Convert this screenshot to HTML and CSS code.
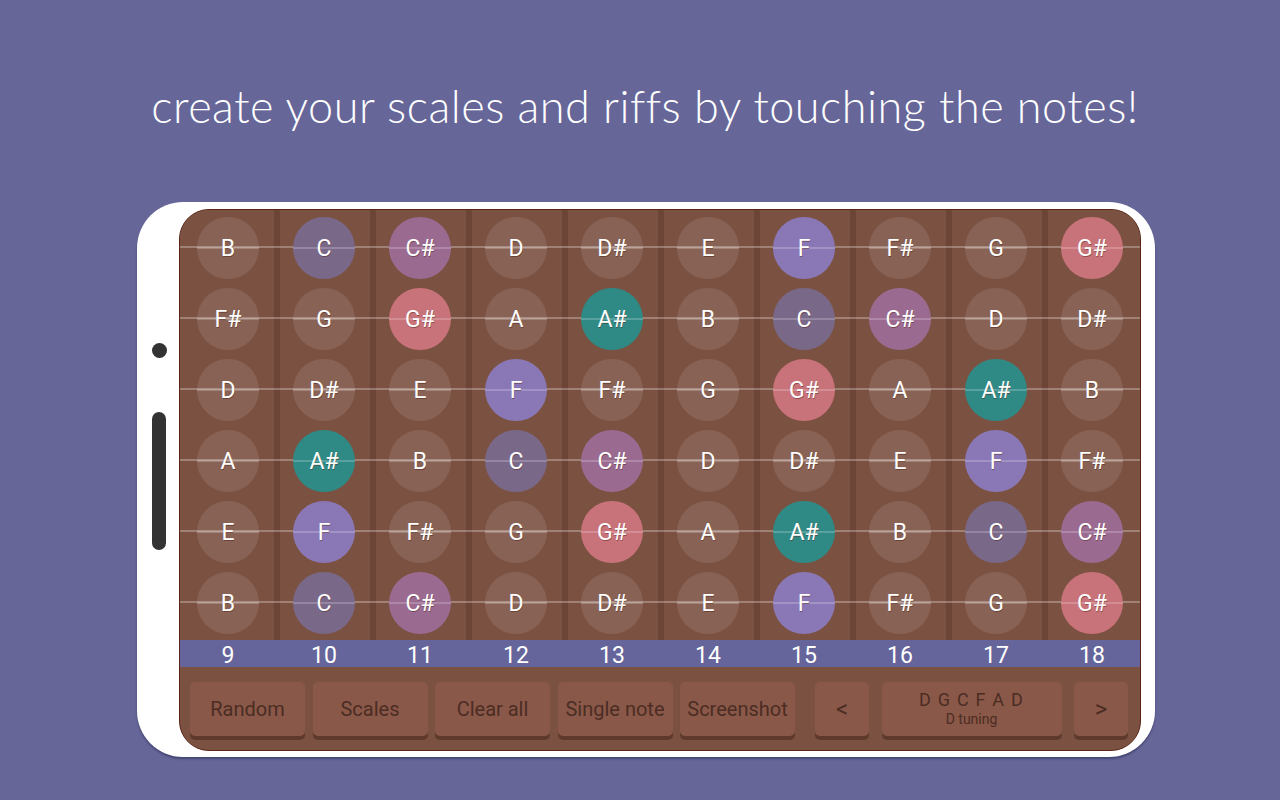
FILE: index.html
```html
<!DOCTYPE html>
<html lang="en">
<head>
<meta charset="utf-8">
<title>Fretboard</title>
<link rel="stylesheet" href="styles.css">
</head>
<body>
<h1 class="title">create your scales and riffs by touching the notes!</h1>
<div class="phone">
  <div class="side"><span class="cam"></span><span class="sidebar"></span></div>
  <div class="screen">
    <div class="fretboard">
      <div class="cell"><span class="note">B</span></div>
      <div class="cell"><span class="note n-c">C</span></div>
      <div class="cell"><span class="note n-cs">C#</span></div>
      <div class="cell"><span class="note">D</span></div>
      <div class="cell"><span class="note">D#</span></div>
      <div class="cell"><span class="note">E</span></div>
      <div class="cell"><span class="note n-f">F</span></div>
      <div class="cell"><span class="note">F#</span></div>
      <div class="cell"><span class="note">G</span></div>
      <div class="cell"><span class="note n-gs">G#</span></div>

      <div class="cell"><span class="note">F#</span></div>
      <div class="cell"><span class="note">G</span></div>
      <div class="cell"><span class="note n-gs">G#</span></div>
      <div class="cell"><span class="note">A</span></div>
      <div class="cell"><span class="note n-as">A#</span></div>
      <div class="cell"><span class="note">B</span></div>
      <div class="cell"><span class="note n-c">C</span></div>
      <div class="cell"><span class="note n-cs">C#</span></div>
      <div class="cell"><span class="note">D</span></div>
      <div class="cell"><span class="note">D#</span></div>

      <div class="cell"><span class="note">D</span></div>
      <div class="cell"><span class="note">D#</span></div>
      <div class="cell"><span class="note">E</span></div>
      <div class="cell"><span class="note n-f">F</span></div>
      <div class="cell"><span class="note">F#</span></div>
      <div class="cell"><span class="note">G</span></div>
      <div class="cell"><span class="note n-gs">G#</span></div>
      <div class="cell"><span class="note">A</span></div>
      <div class="cell"><span class="note n-as">A#</span></div>
      <div class="cell"><span class="note">B</span></div>

      <div class="cell"><span class="note">A</span></div>
      <div class="cell"><span class="note n-as">A#</span></div>
      <div class="cell"><span class="note">B</span></div>
      <div class="cell"><span class="note n-c">C</span></div>
      <div class="cell"><span class="note n-cs">C#</span></div>
      <div class="cell"><span class="note">D</span></div>
      <div class="cell"><span class="note">D#</span></div>
      <div class="cell"><span class="note">E</span></div>
      <div class="cell"><span class="note n-f">F</span></div>
      <div class="cell"><span class="note">F#</span></div>

      <div class="cell"><span class="note">E</span></div>
      <div class="cell"><span class="note n-f">F</span></div>
      <div class="cell"><span class="note">F#</span></div>
      <div class="cell"><span class="note">G</span></div>
      <div class="cell"><span class="note n-gs">G#</span></div>
      <div class="cell"><span class="note">A</span></div>
      <div class="cell"><span class="note n-as">A#</span></div>
      <div class="cell"><span class="note">B</span></div>
      <div class="cell"><span class="note n-c">C</span></div>
      <div class="cell"><span class="note n-cs">C#</span></div>

      <div class="cell"><span class="note">B</span></div>
      <div class="cell"><span class="note n-c">C</span></div>
      <div class="cell"><span class="note n-cs">C#</span></div>
      <div class="cell"><span class="note">D</span></div>
      <div class="cell"><span class="note">D#</span></div>
      <div class="cell"><span class="note">E</span></div>
      <div class="cell"><span class="note n-f">F</span></div>
      <div class="cell"><span class="note">F#</span></div>
      <div class="cell"><span class="note">G</span></div>
      <div class="cell"><span class="note n-gs">G#</span></div>
    </div>
    <div class="frets">
      <span>9</span><span>10</span><span>11</span><span>12</span><span>13</span>
      <span>14</span><span>15</span><span>16</span><span>17</span><span>18</span>
    </div>
    <div class="controls">
      <div class="group group-main">
        <button class="btn">Random</button>
        <button class="btn">Scales</button>
        <button class="btn">Clear all</button>
        <button class="btn">Single note</button>
        <button class="btn">Screenshot</button>
      </div>
      <div class="group group-tuning">
        <button class="btn btn-arrow">&lt;</button>
        <button class="btn btn-tuning"><span class="tuning-notes">D G C F A D</span><span class="tuning-name">D tuning</span></button>
        <button class="btn btn-arrow">&gt;</button>
      </div>
    </div>
  </div>
</div>
</body>
</html>
```

FILE: styles.css
```css
* { box-sizing: border-box; }

html, body {
  margin: 0;
  padding: 0;
}

body {
  width: 1280px;
  height: 800px;
  overflow: hidden;
  background: #666699;
  font-family: Roboto, "Liberation Sans", Arial, sans-serif;
}

.title {
  margin: 0;
  padding-top: 80px;
  padding-left: 10px;
  height: 132px;
  line-height: 52px;
  text-align: center;
  font-family: Lato, "Open Sans", sans-serif;
  font-weight: 300;
  font-size: 45px;
  letter-spacing: 0.5px;
  color: #ffffff;
  white-space: nowrap;
}

.phone {
  margin: 70px 0 0 137px;
  width: 1018px;
  height: 555px;
  padding: 7px 14px 6px 0;
  background: #ffffff;
  border-radius: 46px;
  display: flex;
  box-shadow: 0 2px 2px rgba(30, 30, 70, 0.45);
}

.side {
  width: 42px;
  display: flex;
  flex-direction: column;
  align-items: center;
  padding-top: 134px;
  padding-left: 2px;
}

.cam {
  width: 15px;
  height: 15px;
  border-radius: 50%;
  background: #333333;
}

.sidebar {
  margin-top: 54px;
  width: 14px;
  height: 138px;
  border-radius: 7px;
  background: #333333;
}

.screen {
  width: 962px;
  height: 542px;
  border: 1px solid #5a2416;
  border-radius: 30px;
  overflow: hidden;
  display: flex;
  flex-direction: column;
  background: #7b5141;
}

.fretboard {
  height: 430px;
  padding: 2px 0;
  display: grid;
  grid-template-columns: repeat(10, 96px);
  grid-template-rows: repeat(6, 71px);
  background:
    linear-gradient(90deg, #7b5141 0 4px, transparent 4px),
    linear-gradient(270deg, #7b5141 0 2px, transparent 2px),
    repeating-linear-gradient(90deg, #6c4536 0 6px, #7b5141 6px 96px);
  background-position: 0 0, 0 0, 94px 0;
}

.cell {
  display: flex;
  align-items: center;
  justify-content: center;
  background: linear-gradient(180deg, transparent 34px, rgba(255, 255, 255, 0.28) 34px, rgba(255, 255, 255, 0.28) 36px, transparent 36px);
}

.note {
  width: 62px;
  height: 62px;
  border-radius: 50%;
  display: flex;
  align-items: center;
  justify-content: center;
  padding-top: 2px;
  font-size: 23px;
  color: #ffffff;
  text-shadow: 0.5px 0.8px 0.5px rgba(70, 25, 15, 0.45);
  --bg: rgba(255, 255, 255, 0.1);
  background:
    linear-gradient(180deg, transparent 30px, rgba(255, 255, 255, 0.2) 30px, rgba(255, 255, 255, 0.2) 32px, transparent 32px),
    var(--bg);
}

.n-c { --bg: #7a6889; }
.n-cs { --bg: #9b6a91; }
.n-f { --bg: #8a78b6; }
.n-gs { --bg: #c8727a; }
.n-as { --bg: #2f8a86; }

.frets {
  height: 27px;
  background: #65659b;
  display: grid;
  grid-template-columns: repeat(10, 96px);
}

.frets span {
  text-align: center;
  line-height: 27px;
  padding-top: 2px;
  font-size: 23px;
  color: #ffffff;
}

.controls {
  height: 83px;
  padding: 15px 11px 0 10px;
  display: flex;
  align-items: flex-start;
}

.group {
  display: flex;
}

.group-main {
  gap: 7.5px;
}

.group-tuning {
  margin-left: 20px;
  gap: 12.5px;
}

.btn {
  width: 115px;
  height: 54px;
  border: 0;
  padding: 0;
  margin: 0;
  border-radius: 5px;
  background: #8a5848;
  box-shadow: 0 4px 0 #5e3a2d;
  font-family: Roboto, "Liberation Sans", Arial, sans-serif;
  font-size: 20px;
  color: #4b2d24;
  display: flex;
  flex-direction: column;
  align-items: center;
  justify-content: center;
}

.btn-arrow {
  width: 54px;
  font-size: 24px;
}

.btn-tuning {
  width: 180px;
}

.tuning-notes {
  font-size: 18px;
  letter-spacing: 1.2px;
  line-height: 20px;
}

.tuning-name {
  font-size: 14px;
  line-height: 18px;
}
```
